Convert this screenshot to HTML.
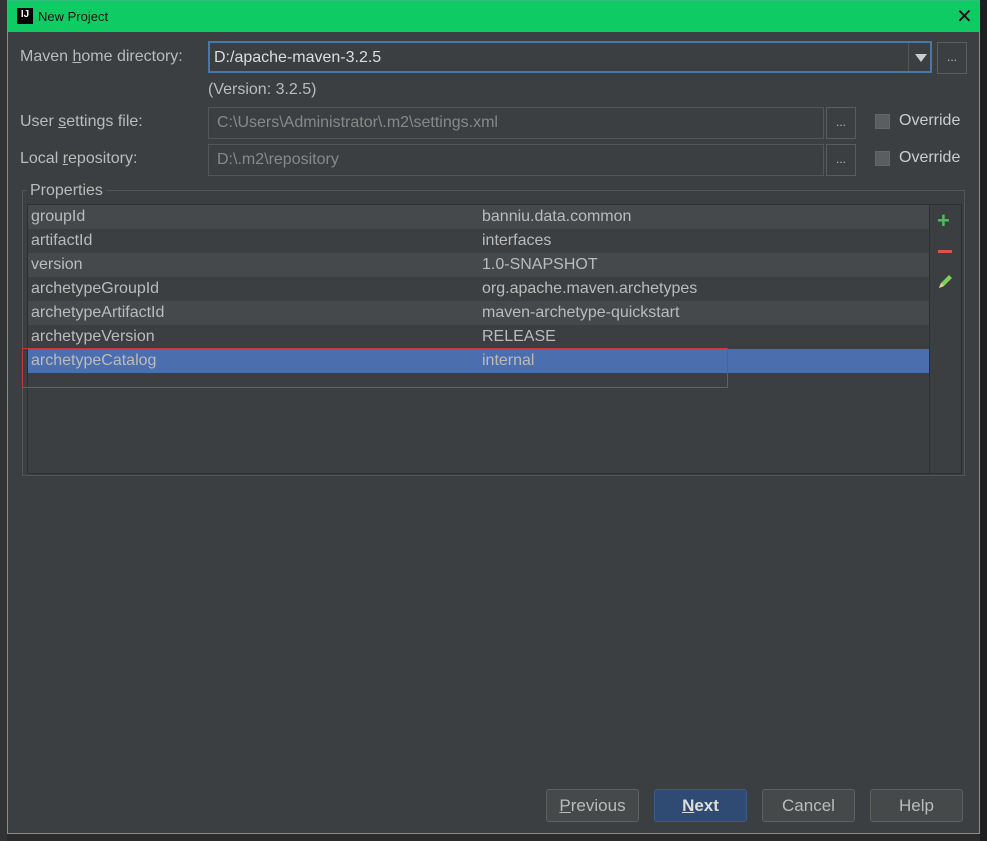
<!DOCTYPE html>
<html><head><style>
*{margin:0;padding:0;box-sizing:border-box}
body{width:987px;height:841px;background:#2b2b2b;font-family:"Liberation Sans",sans-serif;position:relative;overflow:hidden;color:#bbbbbb}
.abs{position:absolute}
.dlg{left:7px;top:0;width:973px;height:834px;background:#3c3f41;border:1px solid #2fbf7a}
.title{left:0;top:0;width:971px;height:31px;background:#0fcb64;color:#111;font-size:13px}
.lbl{font-size:16px;color:#bbbbbb}
.field{border:1px solid #555;background:#3c3f41;font-size:16px;color:#888;padding:6px 8px 0;height:32px}
.btnd{border:1px solid #5a5d5f;background:#3c3f41;color:#bbb;font-size:12px;text-align:center;line-height:28px;height:32px;width:30px}
.cb{width:15px;height:15px;background:#5b5e60;border:1px solid #666}
.row{position:absolute;left:0;width:901px;height:24px;font-size:16px;line-height:24px;color:#bbbbbb}
.row span{position:absolute;left:3px}
.row b{position:absolute;left:454px;font-weight:normal}
.btn{position:absolute;top:788px;height:33px;width:93px;border:1px solid #5e6163;background:#45494a;border-radius:3px;font-size:17px;text-align:center;line-height:31px;color:#bbb}
</style></head><body>
<div class="abs" style="left:0;top:0;width:7px;height:841px;background:#313335"></div>
<div class="abs" style="left:980px;top:0;width:7px;height:841px;background:#1e1f20"></div>
<div class="abs dlg">
 <div class="abs title">
  <div class="abs" style="left:9px;top:7px;width:16px;height:16px;background:#000;color:#fff;font-size:10px;font-weight:bold;line-height:14px;text-align:center">IJ</div>
  <div class="abs" style="left:30px;top:8px">New Project</div>
  <div class="abs" style="left:948px;top:3px;font-size:20px;color:#111">✕</div>
 </div>
 <div class="abs lbl" style="left:12px;top:47px">Maven <u>h</u>ome directory:</div>
 <div class="abs field" style="left:200px;top:40px;width:724px;border:2px solid #4a76a8;color:#ddd;padding:6px 4px 0">D:/apache-maven-3.2.5</div>
 <div class="abs" style="left:900px;top:42px;width:22px;height:28px;border-left:1px solid #555"><div class="abs" style="left:6px;top:11px;width:0;height:0;border-left:6px solid transparent;border-right:6px solid transparent;border-top:8px solid #ccc"></div></div>
 <div class="abs btnd" style="left:929px;top:41px">...</div>
 <div class="abs lbl" style="left:200px;top:80px">(Version: 3.2.5)</div>
 <div class="abs lbl" style="left:12px;top:112px">User <u>s</u>ettings file:</div>
 <div class="abs field" style="left:200px;top:106px;width:616px">C:\Users\Administrator\.m2\settings.xml</div>
 <div class="abs btnd" style="left:818px;top:106px">...</div>
 <div class="abs cb" style="left:867px;top:113px"></div>
 <div class="abs lbl" style="left:891px;top:111px;color:#ccc">Override</div>
 <div class="abs lbl" style="left:12px;top:149px">Local <u>r</u>epository:</div>
 <div class="abs field" style="left:200px;top:143px;width:616px">D:\.m2\repository</div>
 <div class="abs btnd" style="left:818px;top:143px">...</div>
 <div class="abs cb" style="left:867px;top:150px"></div>
 <div class="abs lbl" style="left:891px;top:148px;color:#ccc">Override</div>
 <div class="abs" style="left:14px;top:189px;width:943px;height:286px;border:1px solid #555"></div>
 <div class="abs lbl" style="left:19px;top:181px;background:#3c3f41;padding:0 3px">Properties</div>
 <div class="abs" style="left:19px;top:203px;width:935px;height:270px;border:1px solid #2d2f30;background:#3c3f41">
  <div class="row" style="top:0;background:#46494b"><span>groupId</span><b>banniu.data.common</b></div>
  <div class="row" style="top:24px;background:#3c3f41"><span>artifactId</span><b>interfaces</b></div>
  <div class="row" style="top:48px;background:#46494b"><span>version</span><b>1.0-SNAPSHOT</b></div>
  <div class="row" style="top:72px;background:#3c3f41"><span>archetypeGroupId</span><b>org.apache.maven.archetypes</b></div>
  <div class="row" style="top:96px;background:#46494b"><span>archetypeArtifactId</span><b>maven-archetype-quickstart</b></div>
  <div class="row" style="top:120px;background:#3c3f41"><span>archetypeVersion</span><b>RELEASE</b></div>
  <div class="row" style="top:144px;background:#4b6eaf"><span>archetypeCatalog</span><b>internal</b></div>
  <div class="abs" style="left:901px;top:0;width:1px;height:270px;background:#2d2f30"></div>
  <div class="abs" style="left:909px;top:3px;font-size:22px;color:#4bbf5a;font-weight:bold">+</div>
  <div class="abs" style="left:910px;top:45px;width:14px;height:3px;background:#d9534f"></div>
  <svg class="abs" style="left:908px;top:68px" width="18" height="18" viewBox="0 0 18 18"><path d="M3 15 L5 10 L13 2 L16 5 L8 13 Z" fill="#7fcf5a"/><path d="M3 15 L5 10 L8 13 Z" fill="#e0d0a0"/></svg>
 </div>
 <div class="abs" style="left:14px;top:347px;width:706px;height:40px;border:1px solid #d0303a"></div>
 <div class="btn" style="left:538px"><u>P</u>revious</div>
 <div class="btn" style="left:646px;background:#2f4a73;border-color:#3b5a86;color:#ddd;font-weight:bold"><u>N</u>ext</div>
 <div class="btn" style="left:754px">Cancel</div>
 <div class="btn" style="left:862px">Help</div>
</div>
</body></html>
